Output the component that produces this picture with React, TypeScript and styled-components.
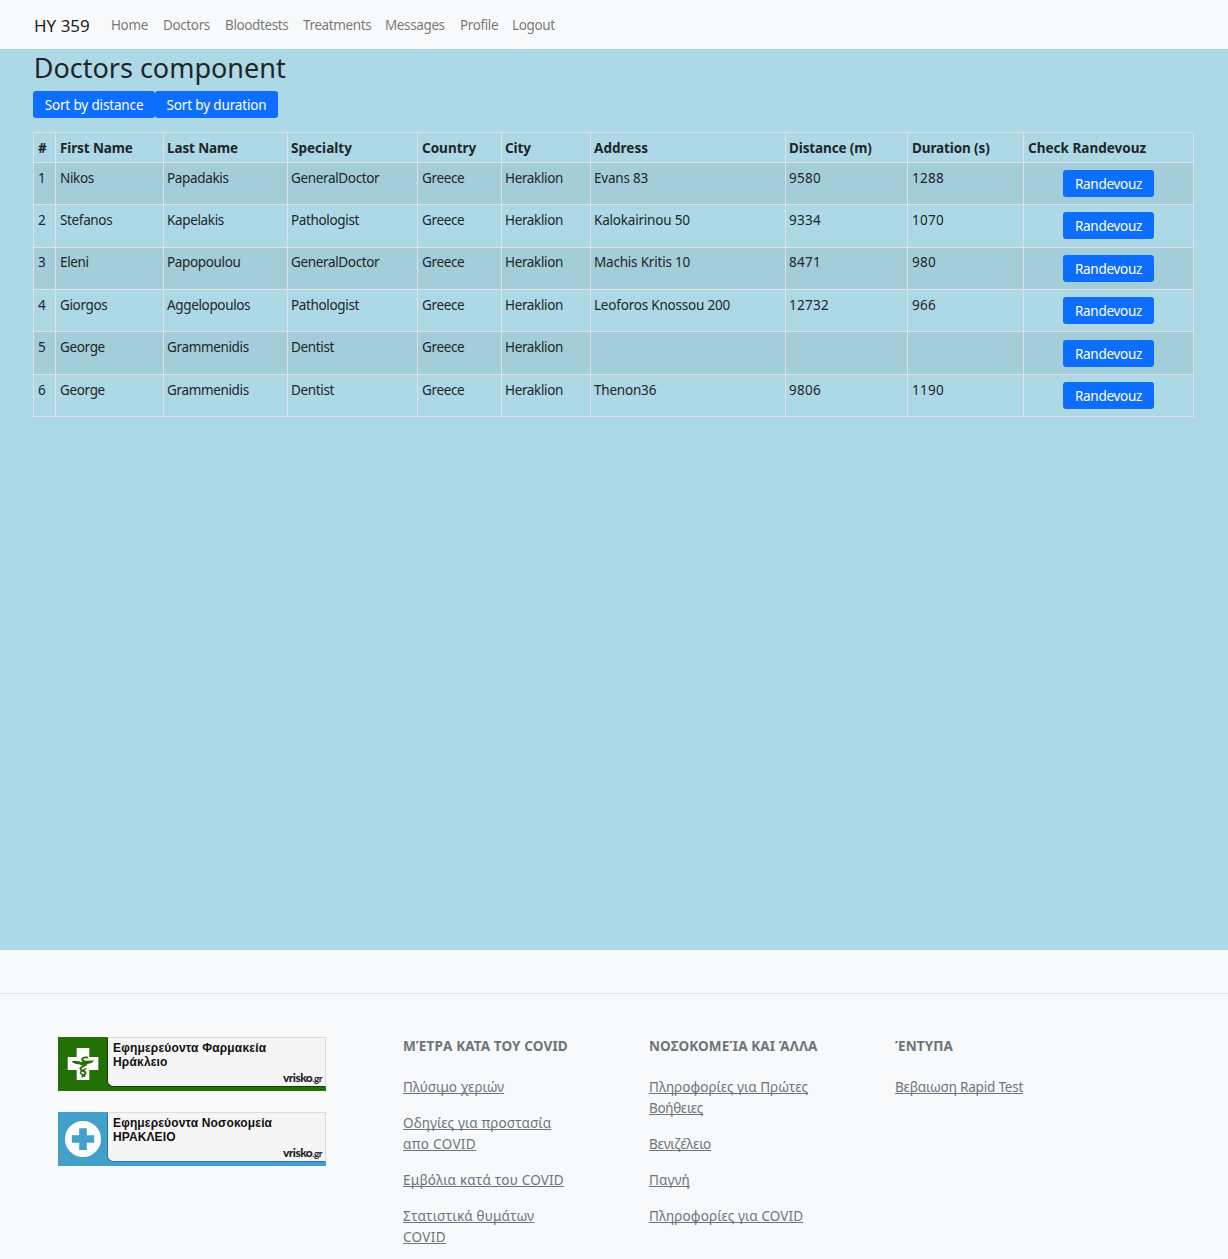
import React from "react";
import styled, { createGlobalStyle } from "styled-components";

const GlobalStyle = createGlobalStyle`
  *, *::before, *::after { box-sizing: border-box; }
  body {
    margin: 0;
    background: #f8f9fa;
    color: #212529;
    font-family: "Noto Sans", "Open Sans", sans-serif;
    font-size: 13.5px;
    line-height: 21px;
    overflow: hidden;
  }
`;

const Page = styled.div`
  display: flex;
  flex-direction: column;
  height: 1259px;
  overflow: hidden;
`;

const Navbar = styled.nav`
  display: flex;
  align-items: center;
  flex: none;
  height: 49px;
  padding: 2px 34px 0;
  background: #f8f9fa;
`;

const Brand = styled.a`
  width: 77px;
  color: rgba(0, 0, 0, 0.9);
  font-size: 17px;
  line-height: 26px;
`;

const NavList = styled.ul`
  display: flex;
  margin: 0;
  padding: 0;
  list-style: none;
`;

const NavItem = styled.li<{ $width: number }>`
  width: ${({ $width }) => $width}px;
  color: rgba(0, 0, 0, 0.55);
  letter-spacing: -0.38px;
  white-space: nowrap;
`;

const Main = styled.main`
  flex: none;
  height: 901px;
  padding: 0 34px 0 33px;
  background: #add8e6;
`;

const Title = styled.h1`
  margin: 0;
  padding: 2px 0 0 0.7px;
  height: 42px;
  font-size: 27px;
  font-weight: 400;
  line-height: 34px;
`;

const Toolbar = styled.div`
  display: flex;
  margin-bottom: 14px;
`;

const Button = styled.button<{ $width: number; $tracking?: number }>`
  display: block;
  width: ${({ $width }) => $width}px;
  height: 27px;
  padding: 1px 0 0;
  border: 0;
  border-radius: 3px;
  background: #0d6efd;
  color: #fff;
  font: inherit;
  line-height: 21px;
  letter-spacing: ${({ $tracking = -0.15 }) => $tracking}px;
  text-align: center;
`;

const Table = styled.table`
  width: 1161px;
  table-layout: fixed;
  border-collapse: separate;
  border-spacing: 0;
  border: solid #dee2e6;
  border-width: 0 1px 1px 0;
`;

const Col = styled.col<{ $width: number }>`
  width: ${({ $width }) => $width}px;
`;

const HeadCell = styled.th<{ $inset: number; $tracking?: number }>`
  height: 30px;
  padding: 1px 0 0 ${({ $inset }) => $inset}px;
  border: solid #dee2e6;
  border-width: 1px 0 0 1px;
  font-weight: 700;
  letter-spacing: ${({ $tracking = -0.12 }) => $tracking}px;
  text-align: left;
  white-space: nowrap;
`;

const Row = styled.tr<{ $height: number }>`
  height: ${({ $height }) => $height}px;
  &:nth-child(odd) { background: rgba(0, 0, 0, 0.05); }
`;

const Cell = styled.td<{ $inset: number; $top: number; $tracking?: number }>`
  padding: ${({ $top }) => $top}px 0 0 ${({ $inset }) => $inset}px;
  border: solid #dee2e6;
  border-width: 1px 0 0 1px;
  letter-spacing: ${({ $tracking = -0.35 }) => $tracking}px;
  vertical-align: top;
  white-space: nowrap;
`;

const NumberCell = styled(Cell)`
  letter-spacing: 0.28px;
`;

const Footer = styled.footer`
  flex: 1;
  background: #f8f9fa;
  color: #6c757d;
`;

const FooterRule = styled.div`
  height: 44px;
  border-bottom: 1px solid #dee2e6;
`;

const FooterColumns = styled.div`
  display: grid;
  grid-template-columns: 345px 246px 246px 246px;
  padding: 42px 0 0 58px;
`;

const Banners = styled.div`
  display: flex;
  flex-direction: column;
  gap: 21px;
  padding-top: 1px;
`;

const Banner = styled.div<{ $color: string }>`
  display: grid;
  grid-template-columns: 49px 219px;
  width: 268px;
  height: 54px;
  background: ${({ $color }) => $color};
`;

const BannerPanel = styled.div<{ $edge: string }>`
  display: flex;
  flex-direction: column;
  height: 50px;
  padding: 3px 3px 0 5px;
  border-top: 1px solid #dcdcdc;
  border-right: 1px solid #dcdcdc;
  border-left: 1px solid ${({ $edge }) => $edge};
  border-bottom: 1px solid ${({ $edge }) => $edge};
  border-bottom-left-radius: 6px;
  background: #f5f5f5;
  color: #111;
  font-family: "Liberation Sans", Arial, sans-serif;
  font-size: 12px;
  font-weight: 700;
  line-height: 14px;
  white-space: nowrap;
`;

const BannerText = styled.span<{ $tracking: number }>`
  letter-spacing: ${({ $tracking }) => $tracking}px;
`;

const Vrisko = styled.span`
  align-self: flex-end;
  margin-top: 2px;
  color: #222;
  font-family: Lato, sans-serif;
  font-size: 12px;
  font-weight: 900;
  line-height: 13px;
  letter-spacing: -0.55px;
`;

const VriskoSuffix = styled.span`
  font-size: 10px;
  font-weight: 700;
`;

const FooterTitle = styled.h6`
  margin: 0 0 20px;
  font-size: 13.5px;
  font-weight: 700;
  line-height: 21px;
  letter-spacing: 0.13px;
  white-space: nowrap;
`;

const FooterLinks = styled.div`
  display: flex;
  flex-direction: column;
  align-items: flex-start;
  gap: 15px;
`;

const FooterLink = styled.a`
  display: flex;
  flex-direction: column;
  align-items: flex-start;
`;

const LinkLine = styled.span<{ $tracking: number }>`
  letter-spacing: ${({ $tracking }) => $tracking}px;
  text-decoration: underline;
  text-decoration-thickness: 1px;
  text-underline-offset: 1px;
  text-decoration-skip-ink: none;
  white-space: nowrap;
`;

const navItems: [string, number][] = [
  ["Home", 52], ["Doctors", 62], ["Bloodtests", 78], ["Treatments", 82],
  ["Messages", 75], ["Profile", 52], ["Logout", 60],
];

const columns: { heading: string; width: number; inset: number; tracking?: number }[] = [
  { heading: "#", width: 22, inset: 4 },
  { heading: "First Name", width: 108, inset: 4 },
  { heading: "Last Name", width: 124, inset: 3 },
  { heading: "Specialty", width: 130, inset: 3, tracking: 0.03 },
  { heading: "Country", width: 84, inset: 4, tracking: 0 },
  { heading: "City", width: 89, inset: 3 },
  { heading: "Address", width: 195, inset: 3, tracking: 0.05 },
  { heading: "Distance (m)", width: 122, inset: 3 },
  { heading: "Duration (s)", width: 116, inset: 4 },
  { heading: "Check Randevouz", width: 170, inset: 4, tracking: 0.02 },
];

const rowHeights = [42, 43, 42, 42, 43, 42];

const doctors = [
  ["Nikos", "Papadakis", "GeneralDoctor", "Evans 83", "9580", "1288"],
  ["Stefanos", "Kapelakis", "Pathologist", "Kalokairinou 50", "9334", "1070"],
  ["Eleni", "Papopoulou", "GeneralDoctor", "Machis Kritis 10", "8471", "980"],
  ["Giorgos", "Aggelopoulos", "Pathologist", "Leoforos Knossou 200", "12732", "966"],
  ["George", "Grammenidis", "Dentist", "", "", ""],
  ["George", "Grammenidis", "Dentist", "Thenon36", "9806", "1190"],
];

type Line = [string, number];

const footerSections: { title: string; links: Line[][] }[] = [
  {
    title: "ΜΈΤΡΑ ΚΑΤΑ ΤΟΥ COVID",
    links: [
      [["Πλύσιμο χεριών", -0.04]],
      [["Οδηγίες για προστασία", 0.1], ["απο COVID", 0.35]],
      [["Εμβόλια κατά του COVID", 0.21]],
      [["Στατιστικά θυμάτων", 0.17], ["COVID", 0.35]],
    ],
  },
  {
    title: "ΝΟΣΟΚΟΜΕΊΑ ΚΑΙ ΆΛΛΑ",
    links: [
      [["Πληροφορίες για Πρώτες", 0.01], ["Βοήθειες", -0.3]],
      [["Βενιζέλειο", -0.24]],
      [["Παγνή", 0.1]],
      [["Πληροφορίες για COVID", 0.09]],
    ],
  },
  { title: "ΈΝΤΥΠΑ", links: [[["Βεβαιωση Rapid Test", -0.2]]] },
];

const PharmacyIcon = () => (
  <svg width="49" height="54" viewBox="0 0 49 54">
    <path d="M18.7 11h12.6v9h9v13h-9v10H18.7V33h-9V20h9z" fill="#fff" />
    <g fill="none" stroke="#237004" strokeLinecap="round">
      <path d="M29 20.500c-3-.4-5.200.7-4.900 2.300.3 1.700 4.800 1.500 4.500 4-.3 2.400-6.300 2.200-6.200 4.900.1 2.500 5.300 1.700 5.200 4.300-.1 1.700-2.300 2-3.400 3.500" strokeWidth="1.900" />
      <path d="M27.800 31.500c-2 1.500-5.300 2.300-5.500 4.300 0 1.900 4.300 1.500 4.500 3.700" strokeWidth="1.500" />
    </g>
    <path d="M13.500 24c4 .2 7-.6 9.500 1.300 1.500-1.300 3-1.800 5-1.600l8.300-.2c-2.200 2.700-5 3.400-7.800 3.400l-3.500 1.800-4.200-1.500c-3-.1-5.800-.9-7.300-3.200z" fill="#237004" />
  </svg>
);

const HospitalIcon = () => (
  <svg width="49" height="54" viewBox="0 0 49 54">
    <circle cx="25" cy="27" r="18" fill="#fff" />
    <path d="M21.200 16.200h7.600v7.100h7.400v7.500h-7.400v7.200h-7.600v-7.200h-7.400v-7.500h7.400z" fill="#459fcb" />
  </svg>
);

export default function App() {
  return (
    <Page>
      <GlobalStyle />
      <Navbar>
        <Brand>HY 359</Brand>
        <NavList>
          {navItems.map(([label, width]) => (
            <NavItem key={label} $width={width}>{label}</NavItem>
          ))}
        </NavList>
      </Navbar>
      <Main>
        <Title>Doctors component</Title>
        <Toolbar>
          <Button $width={122}>Sort by distance</Button>
          <Button $width={123}>Sort by duration</Button>
        </Toolbar>
        <Table>
          <colgroup>
            {columns.map(({ heading, width }) => <Col key={heading} $width={width} />)}
          </colgroup>
          <thead>
            <tr>
              {columns.map(({ heading, inset, tracking }) => (
                <HeadCell key={heading} $inset={inset} $tracking={tracking}>{heading}</HeadCell>
              ))}
            </tr>
          </thead>
          <tbody>
            {doctors.map(([first, last, specialty, address, distance, duration], i) => {
              const top = i === 2 ? 4 : 5;
              return (
                <Row key={i} $height={rowHeights[i]}>
                  <NumberCell $inset={4} $top={top}>{i + 1}</NumberCell>
                  <Cell $inset={4} $top={top}>{first}</Cell>
                  <Cell $inset={3} $top={top}>{last}</Cell>
                  <Cell $inset={3} $top={top}>{specialty}</Cell>
                  <Cell $inset={4} $top={top}>Greece</Cell>
                  <Cell $inset={3} $top={top}>Heraklion</Cell>
                  <Cell $inset={3} $top={top} $tracking={-0.2}>{address}</Cell>
                  <NumberCell $inset={3} $top={top}>{distance}</NumberCell>
                  <NumberCell $inset={4} $top={top}>{duration}</NumberCell>
                  <Cell $inset={39} $top={i === 4 ? 8 : 7}>
                    <Button $width={91} $tracking={-0.3}>Randevouz</Button>
                  </Cell>
                </Row>
              );
            })}
          </tbody>
        </Table>
      </Main>
      <Footer>
        <FooterRule />
        <FooterColumns>
          <Banners>
            <Banner $color="#237004">
              <PharmacyIcon />
              <BannerPanel $edge="#124002">
                <BannerText $tracking={0.18}>Εφημερεύοντα Φαρμακεία</BannerText>
                <BannerText $tracking={0.18}>Ηράκλειο</BannerText>
                <Vrisko>vrisko<VriskoSuffix>.gr</VriskoSuffix></Vrisko>
              </BannerPanel>
            </Banner>
            <Banner $color="#459fcb">
              <HospitalIcon />
              <BannerPanel $edge="#1f77ab">
                <BannerText $tracking={0.15}>Εφημερεύοντα Νοσοκομεία</BannerText>
                <BannerText $tracking={0.1}>ΗΡΑΚΛΕΙΟ</BannerText>
                <Vrisko>vrisko<VriskoSuffix>.gr</VriskoSuffix></Vrisko>
              </BannerPanel>
            </Banner>
          </Banners>
          {footerSections.map(({ title, links }) => (
            <div key={title}>
              <FooterTitle>{title}</FooterTitle>
              <FooterLinks>
                {links.map((lines) => (
                  <FooterLink key={lines[0][0]}>
                    {lines.map(([text, tracking]) => (
                      <LinkLine key={text} $tracking={tracking}>{text}</LinkLine>
                    ))}
                  </FooterLink>
                ))}
              </FooterLinks>
            </div>
          ))}
        </FooterColumns>
      </Footer>
    </Page>
  );
}
